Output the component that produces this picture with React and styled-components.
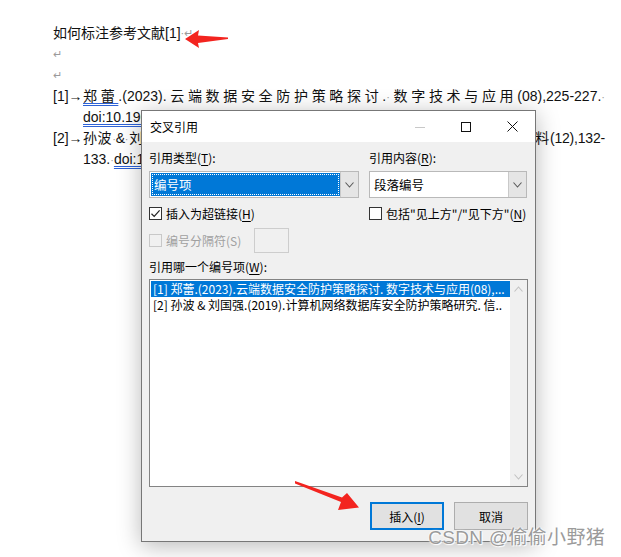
import React from 'react';
import styled, { createGlobalStyle } from 'styled-components';

const GlobalStyle = createGlobalStyle`
  html, body {
    margin: 0;
    padding: 0;
    background: #fff;
  }
  body {
    font-family: "Noto Sans CJK SC", "Liberation Sans", sans-serif;
  }
`;

const Page = styled.div`
  position: relative;
  width: 621px;
  height: 557px;
  overflow: hidden;
  background: #fff;
`;

const Doc = styled.div`
  padding: 23px 16px 0 53px;
  font-family: "Liberation Sans", "Noto Sans CJK SC", sans-serif;
  font-size: 14px;
  line-height: 21px;
  color: #111;
`;

const Para = styled.div`
  display: flex;
  white-space: nowrap;
  height: 21px;
`;

const Mark = styled.span`
  color: #9a9a9a;
  font-size: 11px;
`;

const Num = styled.span`
  width: 30px;
  flex: none;
`;

const Body = styled.span`
  flex: 1;
  min-width: 0;
  text-align: justify;
  text-align-last: justify;
  letter-spacing: ${p => p.$tight ? '-0.2px' : '0'};
`;

const Cont = styled.div`
  padding-left: 30px;
  height: 21px;
  white-space: nowrap;
`;

const Link = styled.span`
  text-decoration: underline double #2d62d6;
  text-underline-offset: 2px;
`;

const Dialog = styled.div`
  position: absolute;
  left: 141px;
  top: 110px;
  width: 393px;
  height: 430px;
  border: 1px solid #777;
  background: #f0f0f0;
  box-shadow: 0 4px 22px rgba(0, 0, 0, 0.28);
  font-size: 12px;
  color: #000;
  display: flex;
  flex-direction: column;
`;

const TitleBar = styled.div`
  height: 31px;
  background: #fff;
  display: flex;
  align-items: center;
  padding-left: 8px;
`;

const Title = styled.span`
  flex: 1;
  font-size: 12px;
`;

const WinBtn = styled.div`
  width: 46px;
  height: 31px;
  display: flex;
  align-items: center;
  justify-content: center;
  color: ${p => (p.$dim ? '#c8c8c8' : '#111')};
`;

const Content = styled.div`
  flex: 1;
  padding: 8px 7px 0 7px;
  display: flex;
  flex-direction: column;
`;

const Cols = styled.div`
  display: grid;
  grid-template-columns: 210px 158px;
  column-gap: 10px;
`;

const Label = styled.div`
  line-height: 16px;
  height: 16px;
  color: ${p => (p.$disabled ? '#a0a0a0' : '#000')};
  margin-top: ${p => p.$top || 0}px;
`;

const Select = styled.div`
  margin-top: 5px;
  height: 27px;
  box-sizing: border-box;
  border: 1px solid #b9b9b9;
  background: #fff;
  display: flex;
  align-items: stretch;
`;

const SelectValue = styled.div`
  flex: 1;
  margin: 1px 0 1px 1px;
  padding-left: 3px;
  display: flex;
  align-items: center;
  font-size: 12.5px;
  background: ${p => (p.$active ? '#0078d7' : '#fff')};
  color: ${p => (p.$active ? '#fff' : '#000')};
  outline: ${p => (p.$active ? '1px dotted #fff' : 'none')};
  outline-offset: -2px;
`;

const DropBtn = styled.div`
  width: 17px;
  background: #e5e5e5;
  border-left: 1px solid #c9c9c9;
  display: flex;
  align-items: center;
  justify-content: center;
`;

const CheckRow = styled.label`
  margin-top: ${p => p.$top || 7}px;
  display: flex;
  align-items: center;
  height: ${p => p.$h || 16}px;
  color: ${p => (p.$disabled ? '#a0a0a0' : '#000')};
  white-space: nowrap;
`;

const Box = styled.span`
  width: 11px;
  height: 11px;
  border: 1px solid ${p => (p.$disabled ? '#c8c8c8' : '#333')};
  background: ${p => (p.$disabled ? '#f0f0f0' : '#fff')};
  margin-right: 4px;
  display: inline-flex;
  align-items: center;
  justify-content: center;
  flex: none;
`;

const SepField = styled.span`
  width: 33px;
  height: 23px;
  border: 1px solid #cdcdcd;
  margin-left: 13px;
`;

const ListBox = styled.div`
  margin-top: 4px;
  height: 205px;
  border: 1px solid #838383;
  background: #fff;
  display: flex;
  padding: 1px 0 0 1px;
  box-sizing: content-box;
`;

const Items = styled.div`
  flex: 1;
  min-width: 0;
`;

const Item = styled.div`
  height: 16px;
  line-height: 16px;
  padding-left: 2px;
  font-size: 12px;
  white-space: nowrap;
  overflow: hidden;
  background: ${p => (p.$selected ? '#0078d7' : 'transparent')};
  color: ${p => (p.$selected ? '#fff' : '#000')};
`;

const ScrollBar = styled.div`
  width: 17px;
  margin-top: -1px;
  background: #f0f0f0;
  display: flex;
  flex-direction: column;
  justify-content: space-between;
  align-items: center;
  padding: 6px 0;
`;

const Buttons = styled.div`
  margin-top: 15px;
  display: flex;
  justify-content: flex-end;
  gap: 10px;
`;

const Button = styled.div`
  width: 74px;
  height: 28px;
  box-sizing: border-box;
  background: #e1e1e1;
  border: ${p => (p.$primary ? '2px solid #0078d7' : '1px solid #adadad')};
  display: flex;
  align-items: center;
  justify-content: center;
  font-size: 12px;
`;

const U = styled.span`
  text-decoration: underline;
  text-underline-offset: 2px;
`;

const Overlay = styled.svg`
  position: absolute;
  inset: 0;
  pointer-events: none;
`;

const Watermark = styled.div`
  position: absolute;
  right: 16px;
  bottom: 8px;
  font-family: "Liberation Sans", "Noto Sans CJK SC", sans-serif;
  font-size: 19px;
  color: #9b9b9b;
  letter-spacing: 0.3px;
  text-shadow: 0 0 2px #fff, 0 0 2px #fff, 1px 1px 1px #fff;
`;

const Chevron = ({ up, color = '#5a5a5a' }) => (
  <svg width="9" height="6" viewBox="0 0 9 6">
    <path d={up ? 'M0.5 5.5 L4.5 1 L8.5 5.5' : 'M0.5 0.5 L4.5 5 L8.5 0.5'} fill="none" stroke={color} strokeWidth="1.1" />
  </svg>
);

const Tick = () => (
  <svg width="11" height="11" viewBox="0 0 11 11">
    <path d="M1.5 5.8 L4.2 8.4 L9.6 2.4" fill="none" stroke="#222" strokeWidth="1.2" />
  </svg>
);

function App() {
  return (
    <Page>
      <GlobalStyle />
      <Doc>
        <Para>如何标注参考文献[1]<Mark>·↵</Mark></Para>
        <Para><Mark>↵</Mark></Para>
        <Para><Mark>↵</Mark></Para>
        <Para>
          <Num>[1]→</Num>
          <Body><Link>郑蕾</Link>.(2023).云端数据安全防护策略探讨.<Mark>·</Mark>数字技术与应用(08),225-227.<Mark>·</Mark></Body>
        </Para>
        <Cont><Link>doi:10.19695/j.cnki.cn12-1369.2023.08.72</Link><Mark>↵</Mark></Cont>
        <Para>
          <Num>[2]→</Num>
          <Body $tight>孙波<Mark>·</Mark>&amp;<Mark>·</Mark>刘国强.(2019).计算机网络数据库安全防护策略研究.<Mark>·</Mark>信息记录材料(12),132-</Body>
        </Para>
        <Cont>133.<Mark>·</Mark><Link>doi:10.16009/j.cnki.cn13-1295/tq.2019.12.090</Link><Mark>↵</Mark></Cont>
      </Doc>

      <Dialog>
        <TitleBar>
          <Title>交叉引用</Title>
          <WinBtn $dim>
            <svg width="10" height="10" viewBox="0 0 10 10"><path d="M0 5.5 H10" stroke="currentColor" strokeWidth="1" /></svg>
          </WinBtn>
          <WinBtn>
            <svg width="10" height="10" viewBox="0 0 10 10"><rect x="0.5" y="0.5" width="9" height="9" fill="none" stroke="currentColor" strokeWidth="1" /></svg>
          </WinBtn>
          <WinBtn>
            <svg width="11" height="11" viewBox="0 0 11 11"><path d="M0.5 0.5 L10.5 10.5 M10.5 0.5 L0.5 10.5" stroke="currentColor" strokeWidth="1" /></svg>
          </WinBtn>
        </TitleBar>
        <Content>
          <Cols>
            <div>
              <Label>引用类型(<U>T</U>):</Label>
              <Select>
                <SelectValue $active>编号项</SelectValue>
                <DropBtn><Chevron /></DropBtn>
              </Select>
              <CheckRow>
                <Box><Tick /></Box>插入为超链接(<U>H</U>)
              </CheckRow>
            </div>
            <div>
              <Label>引用内容(<U>R</U>):</Label>
              <Select>
                <SelectValue>段落编号</SelectValue>
                <DropBtn><Chevron /></DropBtn>
              </Select>
              <CheckRow>
                <Box />包括"见上方"/"见下方"(<U>N</U>)
              </CheckRow>
            </div>
          </Cols>
          <CheckRow $disabled $top={7} $h={25}>
            <Box $disabled />编号分隔符(S)
            <SepField />
          </CheckRow>
          <Label $top={6}>引用哪一个编号项(<U>W</U>):</Label>
          <ListBox>
            <Items>
              <Item $selected>[1] 郑蕾.(2023).云端数据安全防护策略探讨. 数字技术与应用(08),...</Item>
              <Item>[2] 孙波 &amp; 刘国强.(2019).计算机网络数据库安全防护策略研究. 信..</Item>
            </Items>
            <ScrollBar>
              <Chevron up color="#c2c2c2" />
              <Chevron color="#c2c2c2" />
            </ScrollBar>
          </ListBox>
          <Buttons>
            <Button $primary>插入(<U>I</U>)</Button>
            <Button>取消</Button>
          </Buttons>
        </Content>
      </Dialog>

      <Overlay width="621" height="557" viewBox="0 0 621 557">
        <polygon points="185,39 199,30 198,35.5 228,37.5 228,39 198,43 199,48" fill="#f3241f" />
        <polygon points="295,481 342,497.5 347,493 359,507.5 338,510 341,502 295,483.5" fill="#f3241f" />
      </Overlay>

      <Watermark>CSDN @偷偷小野猪</Watermark>
    </Page>
  );
}

export default App;
